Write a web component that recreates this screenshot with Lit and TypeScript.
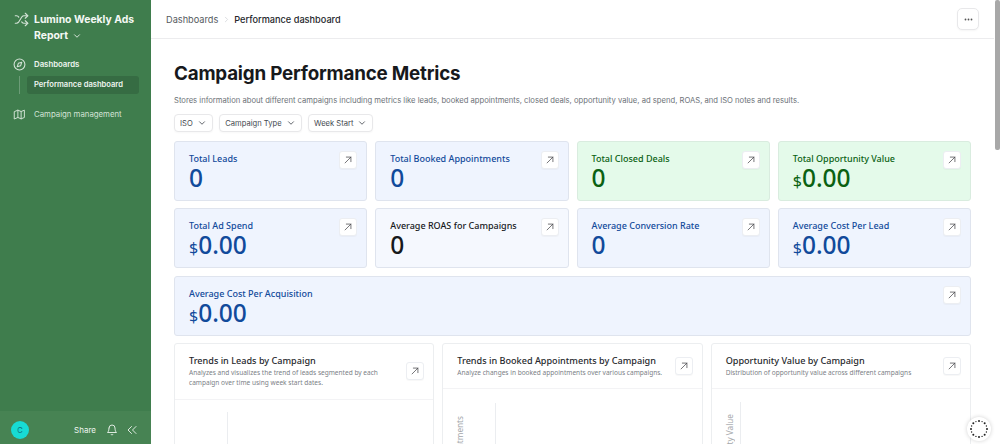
import { LitElement, css, html, svg } from 'lit'
import { customElement } from 'lit/decorators.js'

type Tone = 'blue' | 'green' | 'plain'

interface Metric {
  label: string
  value: string
  money?: boolean
  tone: Tone
  wide?: boolean
}

const metrics: Metric[] = [
  { label: 'Total Leads', value: '0', tone: 'blue' },
  { label: 'Total Booked Appointments', value: '0', tone: 'blue' },
  { label: 'Total Closed Deals', value: '0', tone: 'green' },
  { label: 'Total Opportunity Value', value: '0.00', money: true, tone: 'green' },
  { label: 'Total Ad Spend', value: '0.00', money: true, tone: 'blue' },
  { label: 'Average ROAS for Campaigns', value: '0', tone: 'plain' },
  { label: 'Average Conversion Rate', value: '0', tone: 'blue' },
  { label: 'Average Cost Per Lead', value: '0.00', money: true, tone: 'blue' },
  { label: 'Average Cost Per Acquisition', value: '0.00', money: true, tone: 'blue', wide: true },
]

const charts = [
  {
    title: 'Trends in Leads by Campaign',
    desc: 'Analyzes and visualizes the trend of leads segmented by each campaign over time using week start dates.',
    axis: '',
    cls: 'c1',
  },
  {
    title: 'Trends in Booked Appointments by Campaign',
    desc: 'Analyze changes in booked appointments over various campaigns.',
    axis: 'Appointments',
    cls: 'c2',
  },
  {
    title: 'Opportunity Value by Campaign',
    desc: 'Distribution of opportunity value across different campaigns',
    axis: 'Opportunity Value',
    cls: 'c3',
  },
]

const arrow = html`<svg width="10" height="10" viewBox="0 0 24 24" fill="none" stroke="#47474b" stroke-width="1.8" stroke-linecap="round" stroke-linejoin="round"><path d="M5 19 19 5"/><path d="M8 5h11v11"/></svg>`
const chevron = html`<svg width="10" height="10" viewBox="0 0 24 24" fill="none" stroke="currentColor" stroke-width="2" stroke-linecap="round" stroke-linejoin="round"><path d="m6 9 6 6 6-6"/></svg>`

const dots = Array.from({ length: 16 }, (_, i) => {
  const a = (i / 16) * Math.PI * 2
  return svg`<circle cx=${12 + Math.cos(a) * 8} cy=${12 + Math.sin(a) * 8} r=${i % 2 ? 0.7 : 1} fill="#222"/>`
})

@customElement('app-root')
export class AppRoot extends LitElement {
  render() {
    return html`
      <aside class="side">
        <div class="brand">
          <svg class="brand-icon" width="15" height="15" viewBox="0 0 24 24" fill="none" stroke="currentColor" stroke-width="1.8" stroke-linecap="round" stroke-linejoin="round">
            <path d="m18 14 4 4-4 4"/><path d="m18 2 4 4-4 4"/>
            <path d="M2 18h1.973a4 4 0 0 0 3.3-1.7l5.454-8.6a4 4 0 0 1 3.3-1.7H22"/>
            <path d="M2 6h1.972a4 4 0 0 1 3.6 2.2"/><path d="M22 18h-6.041a4 4 0 0 1-3.3-1.8l-.359-.45"/>
          </svg>
          <div class="brand-name">Lumino Weekly Ads Report <span class="brand-caret">${chevron}</span></div>
        </div>

        <div class="nav-group">
          <div class="nav-head">
            <svg width="13" height="13" viewBox="0 0 24 24" fill="none" stroke="currentColor" stroke-width="2" stroke-linecap="round" stroke-linejoin="round"><circle cx="12" cy="12" r="10"/><path d="m16.24 7.76-2.12 6.36-6.36 2.12 2.12-6.36z"/></svg>
            <span>Dashboards</span>
          </div>
          <div class="nav-sub">
            <div class="nav-active">Performance dashboard</div>
          </div>
        </div>

        <div class="nav-link">
          <svg width="13" height="13" viewBox="0 0 24 24" fill="none" stroke="currentColor" stroke-width="1.8" stroke-linecap="round" stroke-linejoin="round"><path d="M3 6.5 9 4l6 2.5L21 4v13.5L15 20l-6-2.5L3 20z"/><path d="M9 4v13.5"/><path d="M15 6.5V20"/></svg>
          <span>Campaign management</span>
        </div>

        <div class="side-foot">
          <div class="avatar">C</div>
          <span class="share">Share</span>
          <svg class="foot-icon" width="12" height="12" viewBox="0 0 24 24" fill="none" stroke="currentColor" stroke-width="1.8" stroke-linecap="round" stroke-linejoin="round"><path d="M6 8a6 6 0 0 1 12 0c0 7 3 9 3 9H3s3-2 3-9"/><path d="M10.3 21a1.94 1.94 0 0 0 3.4 0"/></svg>
          <svg class="foot-icon last" width="12" height="12" viewBox="0 0 24 24" fill="none" stroke="currentColor" stroke-width="1.8" stroke-linecap="round" stroke-linejoin="round"><path d="m11 19-7-7 7-7"/><path d="m20 19-7-7 7-7"/></svg>
        </div>
      </aside>

      <div class="main">
        <header class="top">
          <span class="crumb">Dashboards</span>
          <svg width="9" height="9" viewBox="0 0 24 24" fill="none" stroke="#d0d3d7" stroke-width="2" stroke-linecap="round" stroke-linejoin="round"><path d="m9 18 6-6-6-6"/></svg>
          <span class="crumb current">Performance dashboard</span>
          <button class="more">
            <svg width="9" height="9" viewBox="0 0 24 24" fill="#555"><circle cx="4" cy="12" r="2.4"/><circle cx="12" cy="12" r="2.4"/><circle cx="20" cy="12" r="2.4"/></svg>
          </button>
        </header>

        <div class="content">
          <h1>Campaign Performance Metrics</h1>
          <p class="lead">Stores information about different campaigns including metrics like leads, booked appointments, closed deals, opportunity value, ad spend, ROAS, and ISO notes and results.</p>

          <div class="filters">
            ${['ISO', 'Campaign Type', 'Week Start'].map(f => html`<button class="filter">${f} ${chevron}</button>`)}
          </div>

          <div class="metrics">
            ${metrics.map(m => html`
              <div class="metric ${m.tone} ${m.wide ? 'wide' : ''}">
                <div class="metric-text">
                  <div class="metric-label">${m.label}</div>
                  <div class="metric-value">${m.money ? html`<span class="cur">$</span>` : ''}${m.value}</div>
                </div>
                <button class="open">${arrow}</button>
              </div>
            `)}
          </div>

          <div class="charts">
            ${charts.map(c => html`
              <div class="chart ${c.cls}">
                <div class="chart-head">
                  <div class="chart-text">
                    <div class="chart-title">${c.title}</div>
                    <div class="chart-desc">${c.desc}</div>
                  </div>
                  <button class="open">${arrow}</button>
                </div>
                <div class="chart-body">
                  <div class="axis-label">${c.axis}</div>
                  <div class="axis-line"></div>
                </div>
              </div>
            `)}
          </div>
        </div>

        <div class="spinner">
          <svg width="24" height="24" viewBox="0 0 24 24">${dots}</svg>
        </div>
      </div>

      <div class="scrollbar"><div class="thumb"></div></div>
    `
  }

  static styles = css`
    :host {
      display: flex;
      height: 100vh;
      overflow: hidden;
      background: #fff;
      font-family: Inter, 'Noto Sans', sans-serif;
      color: #1a1c20;
    }
    button {
      font: inherit;
      color: inherit;
      background: #fff;
      padding: 0;
      cursor: pointer;
    }

    .side {
      flex: 0 0 151px;
      min-width: 0;
      display: flex;
      flex-direction: column;
      background: #3f7d4d;
      color: #eef5ef;
      font-size: 7.8px;
    }
    .brand {
      display: flex;
      gap: 5px;
      padding: 12px 10px 0 14px;
    }
    .brand-icon {
      flex: none;
      opacity: 0.85;
    }
    .brand-name {
      font-size: 10.4px;
      line-height: 16px;
      font-weight: 700;
      color: #f4f8f4;
    }
    .brand-caret {
      display: inline-block;
      vertical-align: -2px;
      margin-left: 1px;
    }
    .nav-group {
      margin-top: 11px;
      padding: 0 12px 0 13px;
    }
    .nav-head {
      display: flex;
      align-items: center;
      gap: 8px;
      height: 14px;
      font-weight: 600;
      margin-bottom: 5px;
    }
    .nav-head svg {
      flex: none;
      opacity: 0.85;
    }
    .nav-sub {
      margin-left: 6px;
      padding-left: 7px;
      border-left: 1px solid #6c9c77;
    }
    .nav-active {
      height: 18px;
      line-height: 18px;
      padding-left: 7px;
      border-radius: 3px;
      background: #366c43;
      font-size: 7.6px;
      font-weight: 600;
      white-space: nowrap;
    }
    .nav-link {
      display: flex;
      align-items: center;
      gap: 8px;
      margin-top: 13px;
      padding-left: 13px;
      height: 14px;
      color: #d3e3d6;
    }
    .side-foot {
      margin-top: auto;
      height: 33px;
      box-sizing: border-box;
      display: flex;
      align-items: center;
      padding: 5px 13px 0 11px;
      background: #478353;
    }
    .avatar {
      width: 18px;
      height: 18px;
      border-radius: 50%;
      background: #17dbd4;
      color: #0d6f78;
      font-size: 7.5px;
      display: flex;
      align-items: center;
      justify-content: center;
    }
    .share {
      margin-left: auto;
      margin-right: 10px;
      font-size: 8px;
    }
    .foot-icon {
      flex: none;
    }
    .foot-icon.last {
      margin-left: 8px;
    }

    .main {
      flex: 1;
      min-width: 0;
      position: relative;
      display: flex;
      flex-direction: column;
    }
    .top {
      flex: none;
      height: 39px;
      box-sizing: border-box;
      display: flex;
      align-items: center;
      gap: 3.5px;
      padding: 0 15px;
      border-bottom: 1px solid #ececee;
      font-size: 9.2px;
    }
    .crumb {
      color: #555a60;
    }
    .crumb.current {
      color: #26282c;
      font-weight: 500;
    }
    .more {
      margin-left: auto;
      width: 22px;
      height: 22px;
      display: flex;
      align-items: center;
      justify-content: center;
      border: 1px solid #e8e8ea;
      border-radius: 5px;
      box-shadow: 0 1px 2px rgba(0, 0, 0, 0.04);
    }

    .content {
      flex: 1;
      min-height: 0;
      overflow: hidden;
      padding: 23px 23px 0 23px;
    }
    h1 {
      margin: 0;
      font-size: 18.8px;
      line-height: 24px;
      font-weight: 700;
      letter-spacing: -0.2px;
      color: #17191c;
    }
    .lead {
      margin: 9px 0 0 0;
      font-size: 7.65px;
      line-height: 12px;
      color: #6d7278;
      white-space: nowrap;
    }
    .filters {
      display: flex;
      gap: 6.5px;
      margin-top: 7px;
    }
    .filter {
      height: 18px;
      display: flex;
      align-items: center;
      gap: 4px;
      padding: 0 5px;
      font-size: 7.6px;
      color: #444950;
      border: 1px solid #e8e8ea;
      border-radius: 4px;
      box-shadow: 0 1px 2px rgba(0, 0, 0, 0.03);
    }

    .metrics {
      display: grid;
      grid-template-columns: repeat(4, 1fr);
      gap: 7.25px 8px;
      margin-top: 9px;
      font-family: 'Noto Sans', 'Open Sans', sans-serif;
    }
    .metric {
      height: 60px;
      box-sizing: border-box;
      display: flex;
      justify-content: space-between;
      padding: 9px 9px 0 14px;
      border: 1px solid #dfe4ee;
      border-radius: 3px;
    }
    .metric.wide {
      grid-column: 1 / -1;
    }
    .metric.blue {
      background: #eff4fe;
      color: #114a9b;
    }
    .metric.green {
      background: #e4faea;
      border-color: #d9ecdf;
      color: #0a6112;
    }
    .metric.plain {
      background: #f5f8fe;
      color: #17191c;
    }
    .metric-label {
      font-size: 9px;
      line-height: 15px;
      font-weight: 500;
    }
    .metric-value {
      font-size: 24.5px;
      line-height: 24px;
      font-weight: 500;
    }
    .cur {
      font-size: 16px;
      font-weight: 400;
    }
    .open {
      flex: none;
      width: 18px;
      height: 18px;
      display: flex;
      align-items: center;
      justify-content: center;
      border: 1px solid #eceef2;
      border-radius: 3px;
      box-shadow: 0 1px 1px rgba(0, 0, 0, 0.03);
    }

    .charts {
      display: grid;
      grid-template-columns: repeat(3, 1fr);
      gap: 8px;
      margin-top: 7.25px;
      font-family: 'Noto Sans', 'Open Sans', sans-serif;
    }
    .chart {
      height: 160px;
      box-sizing: border-box;
      overflow: hidden;
      border: 1px solid #eceef0;
      border-radius: 3px;
    }
    .chart-head {
      display: flex;
      justify-content: space-between;
      align-items: center;
      height: 45px;
      padding: 0 9px 0 14px;
      box-sizing: border-box;
      border-bottom: 1px solid #f3f3f5;
      gap: 6px;
    }
    .c1 .chart-head {
      height: 56px;
    }
    .chart-title {
      font-size: 9.1px;
      line-height: 13px;
      font-weight: 500;
      color: #26282c;
      white-space: nowrap;
    }
    .chart-desc {
      margin-top: 1px;
      font-size: 6.55px;
      line-height: 10.5px;
      color: #7b8086;
    }
    .chart-body {
      display: flex;
      align-items: flex-start;
    }
    .axis-label {
      writing-mode: vertical-rl;
      transform: rotate(180deg);
      flex: none;
      font-size: 8.2px;
      line-height: 12px;
      color: #a4a7ab;
      white-space: nowrap;
    }
    .axis-line {
      flex: none;
      width: 1px;
      height: 100px;
      background: #ebedf0;
    }
    .c1 .chart-body {
      padding: 12px 0 0 52px;
    }
    .c2 .chart-body {
      padding: 14px 0 0 11px;
    }
    .c2 .axis-label {
      margin-top: 13px;
    }
    .c2 .axis-line {
      margin-left: 29px;
    }
    .c3 .chart-body {
      padding: 13px 0 0 12px;
    }
    .c3 .axis-label {
      margin-top: 12px;
    }
    .c3 .axis-line {
      margin-left: 4px;
    }

    .spinner {
      position: absolute;
      right: 3px;
      bottom: 3px;
      width: 24px;
      height: 24px;
      background: #fff;
      border-radius: 50%;
      box-shadow: 0 0 4px rgba(0, 0, 0, 0.18);
    }

    .scrollbar {
      flex: 0 0 6px;
      background: #fff;
    }
    .thumb {
      height: 150px;
      margin-left: 1px;
      width: 5px;
      border-radius: 2px;
      background: #a8a8a8;
    }
  `
}

declare global {
  interface HTMLElementTagNameMap {
    'app-root': AppRoot
  }
}
